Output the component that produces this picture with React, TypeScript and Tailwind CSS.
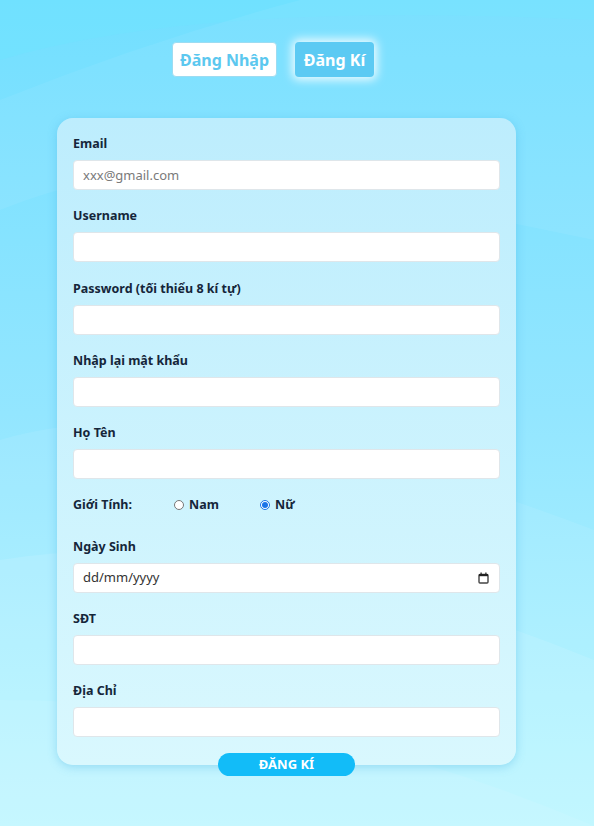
import React from "react";

const font = { fontFamily: '"Noto Sans", "Open Sans", sans-serif' };

function Field({ label, children }: { label: string; children: React.ReactNode }) {
  return (
    <div className="flex flex-col">
      <label className="text-[12.5px] leading-[16px] font-bold text-[#15263a] mb-[8px]">{label}</label>
      {children}
    </div>
  );
}

function Input({ placeholder }: { placeholder?: string }) {
  return (
    <input
      placeholder={placeholder}
      className="h-[30px] w-full rounded-[4px] border border-[#dfe6ea] bg-white px-[9px] text-[13px] text-[#333] placeholder:text-[#7a7a7a] outline-none"
      style={font}
    />
  );
}

export default function App() {
  return (
    <div
      className="relative w-[594px] h-[826px] overflow-hidden bg-gradient-to-b from-[#72dfff] via-[#93e6ff] to-[#b6f6ff]"
      style={font}
    >
      <svg className="absolute inset-0" width="594" height="826" viewBox="0 0 594 826">
        <path d="M0 60 Q200 0 594 20 L594 0 L0 0 Z" fill="#6fe2ff" opacity="0.6" />
        <path d="M0 210 Q150 150 300 180 T594 240 L594 0 L300 0 Q150 40 0 100 Z" fill="#ffffff" opacity="0.06" />
        <path d="M0 440 Q200 380 594 530 L594 826 L0 826 Z" fill="#ffffff" opacity="0.08" />
        <path d="M0 560 Q250 520 594 660 L594 826 L0 826 Z" fill="#ffffff" opacity="0.1" />
        <path d="M0 700 Q300 700 594 826 L0 826 Z" fill="#ffffff" opacity="0.08" />
      </svg>

      <div className="relative flex flex-col">
        <div className="flex pl-[172px] pt-[42px] gap-[18px]">
          <button className="h-[35px] w-[105px] rounded-[4px] border border-[#9cdcf2] bg-white text-[16px] font-bold text-[#5cc8ef]">
            Đăng Nhập
          </button>
          <button className="h-[35px] w-[79px] rounded-[4px] bg-[#5ccaf3] text-[16px] font-bold text-white shadow-[0_0_10px_3px_rgba(255,255,255,0.85)]">
            Đăng Kí
          </button>
        </div>

        <div className="ml-[57px] mt-[41px] w-[459px] rounded-[16px] bg-gradient-to-b from-[#bdedfd] to-[#d9f8fe] shadow-[0_2px_10px_rgba(60,170,220,0.35)] px-[16px] pt-[18px] flex flex-col">
          <div className="flex flex-col gap-[18.3px]">
            <Field label="Email">
              <Input placeholder="xxx@gmail.com" />
            </Field>
            <Field label="Username">
              <Input />
            </Field>
            <Field label="Password (tối thiểu 8 kí tự)">
              <Input />
            </Field>
            <Field label="Nhập lại mật khẩu">
              <Input />
            </Field>
            <Field label="Họ Tên">
              <Input />
            </Field>
            <div className="flex items-center h-[16px] text-[12.5px] font-bold text-[#15263a] mb-[7px]">
              <span className="w-[101px]">Giới Tính:</span>
              <span className="flex items-center w-[86px]">
                <span className="w-[10px] h-[10px] rounded-full border border-[#777] bg-white mr-[5px]" />
                Nam
              </span>
              <span className="flex items-center">
                <span className="w-[10px] h-[10px] rounded-full border border-[#1a73e8] bg-white mr-[5px] flex items-center justify-center">
                  <span className="w-[6px] h-[6px] rounded-full bg-[#1a73e8]" />
                </span>
                Nữ
              </span>
            </div>
            <Field label="Ngày Sinh">
              <div className="h-[30px] w-full rounded-[4px] border border-[#dfe6ea] bg-white pl-[9px] pr-[10px] flex items-center justify-between text-[13px] text-[#333]">
                <span>dd/mm/yyyy</span>
                <svg width="11" height="12" viewBox="0 0 11 12">
                  <rect x="1" y="2.5" width="9" height="8.5" rx="1" fill="none" stroke="#444" strokeWidth="1.4" />
                  <rect x="1" y="2" width="9" height="2.2" fill="#222" />
                  <rect x="2.5" y="0.5" width="1.2" height="2" fill="#222" />
                  <rect x="7.3" y="0.5" width="1.2" height="2" fill="#222" />
                </svg>
              </div>
            </Field>
            <Field label="SĐT">
              <Input />
            </Field>
            <Field label="Địa Chỉ">
              <Input />
            </Field>
          </div>
          <button className="self-center mt-[16px] -mb-[11px] h-[23px] w-[137px] rounded-full bg-[#12bcf8] text-[13px] font-bold text-white">
            ĐĂNG KÍ
          </button>
        </div>
      </div>
    </div>
  );
}
